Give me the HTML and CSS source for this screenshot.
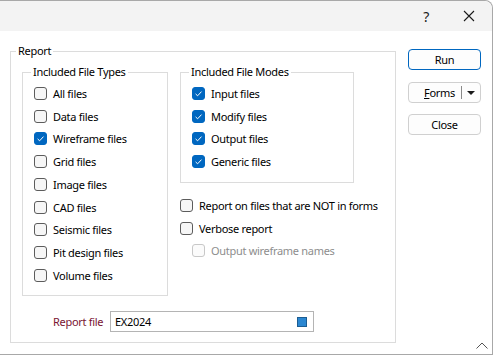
FILE: index.html
```html
<!DOCTYPE html>
<html>
<head>
    <title>Report</title>
    <link rel="stylesheet" href="styles.css">
</head>
<body>
    <div class="window">
        <div class="titlebar">
            <span class="help">?</span>
            <span class="close-x">
                <svg width="12" height="12" viewBox="0 0 12 12"><path d="M1 1L11 11M11 1L1 11" stroke="#1a1a1a" stroke-width="1.1" fill="none"/></svg>
            </span>
        </div>
        <div class="content">
            <fieldset class="group report">
                <legend>Report</legend>
                <div class="report-body">
                    <div class="report-top">
                        <fieldset class="group types">
                            <legend>Included File Types</legend>
                            <div class="group-body">
                                <div class="check"><span class="box"></span>All files</div>
                                <div class="check"><span class="box"></span>Data files</div>
                                <div class="check"><span class="box checked"><svg width="13" height="13" viewBox="0 0 13 13"><path d="M3.6 6.9L5.6 8.8L9.5 4.6" stroke="#fff" stroke-width="1" fill="none"/></svg></span>Wireframe files</div>
                                <div class="check"><span class="box"></span>Grid files</div>
                                <div class="check"><span class="box"></span>Image files</div>
                                <div class="check"><span class="box"></span>CAD files</div>
                                <div class="check"><span class="box"></span>Seismic files</div>
                                <div class="check"><span class="box"></span>Pit design files</div>
                                <div class="check"><span class="box"></span>Volume files</div>
                            </div>
                        </fieldset>
                        <div class="right-col">
                            <fieldset class="group modes">
                                <legend>Included File Modes</legend>
                                <div class="group-body">
                                    <div class="check"><span class="box checked"><svg width="13" height="13" viewBox="0 0 13 13"><path d="M3.6 6.9L5.6 8.8L9.5 4.6" stroke="#fff" stroke-width="1" fill="none"/></svg></span>Input files</div>
                                    <div class="check"><span class="box checked"><svg width="13" height="13" viewBox="0 0 13 13"><path d="M3.6 6.9L5.6 8.8L9.5 4.6" stroke="#fff" stroke-width="1" fill="none"/></svg></span>Modify files</div>
                                    <div class="check"><span class="box checked"><svg width="13" height="13" viewBox="0 0 13 13"><path d="M3.6 6.9L5.6 8.8L9.5 4.6" stroke="#fff" stroke-width="1" fill="none"/></svg></span>Output files</div>
                                    <div class="check"><span class="box checked"><svg width="13" height="13" viewBox="0 0 13 13"><path d="M3.6 6.9L5.6 8.8L9.5 4.6" stroke="#fff" stroke-width="1" fill="none"/></svg></span>Generic files</div>
                                </div>
                            </fieldset>
                            <div class="options">
                                <div class="check"><span class="box"></span>Report on files that are NOT in forms</div>
                                <div class="check"><span class="box"></span>Verbose report</div>
                                <div class="check disabled indent"><span class="box"></span>Output wireframe names</div>
                            </div>
                        </div>
                    </div>
                    <div class="file-row">
                        <span class="file-label">Report file</span>
                        <div class="file-input">
                            <span>EX2024</span>
                            <span class="browse"></span>
                        </div>
                    </div>
                </div>
            </fieldset>
            <div class="buttons">
                <div class="btn default">Run</div>
                <div class="btn split"><span class="split-text"><u>F</u>orms</span><span class="split-sep"></span><span class="split-arrow"></span></div>
                <div class="btn">Close</div>
            </div>
        </div>
        <div class="grip">
            <svg width="12" height="7" viewBox="0 0 12 7"><path d="M0.5 6.5L6 1L11.5 6.5" stroke="#555" stroke-width="1" fill="none"/></svg>
        </div>
    </div>
</body>
</html>
```

FILE: styles.css
```css
body {
    margin: 0;
    background: #ffffff;
    font-family: "Noto Sans", sans-serif;
    font-size: 11px;
    letter-spacing: -0.3px;
    color: #000;
}
.window {
    position: relative;
    width: 492px;
    height: 353px;
    background: #fff;
    border-top: 1px solid #a8a8a8;
    border-right: 1px solid #a8a8a8;
    border-bottom: 1px solid #a8a8a8;
    border-top-right-radius: 8px;
}
.titlebar {
    height: 30px;
    background: #f3f3f3;
    border-top-right-radius: 8px;
    display: flex;
    align-items: center;
    justify-content: flex-end;
}
.help {
    font-size: 14px;
    margin-right: 34px;
    color: #1a1a1a;
}
.close-x {
    display: flex;
    margin-right: 17px;
}
.content {
    display: flex;
    padding: 12px 0 0 10px;
}
.group {
    margin: 0;
    padding: 0;
    border: 1px solid #dcdcdc;
    box-sizing: border-box;
    min-width: 0;
}
.group legend {
    padding: 0 2px;
    margin-left: 8px;
    line-height: 16px;
}
.report {
    width: 386px;
    height: 300px;
}
.report > legend {
    margin-left: 5px;
}
.report-body {
    padding: 5px 0 0 11px;
}
.report-top {
    display: flex;
    gap: 12px;
}
.types {
    width: 146px;
    height: 232px;
}
.modes {
    width: 174px;
    height: 119px;
}
.group-body {
    padding: 2px 0 0 11px;
}
.check {
    height: 22.75px;
    display: flex;
    align-items: center;
    white-space: nowrap;
}
.box {
    width: 13px;
    height: 13px;
    box-sizing: border-box;
    border: 1px solid #5c5c5c;
    border-radius: 3px;
    background: #f6f6f6;
    margin-right: 6px;
    flex-shrink: 0;
    display: flex;
}
.box.checked {
    background: #0067c0;
    border-color: #0067c0;
}
.box.checked svg {
    margin: -1px;
}
.options {
    margin-top: 11px;
}
.indent {
    padding-left: 12px;
}
.disabled {
    color: #8d8d8d;
}
.disabled .box {
    border-color: #c8c8c8;
    background: #fbfbfb;
}
.file-row {
    display: flex;
    align-items: center;
    margin-top: 15px;
    padding-left: 31px;
}
.file-label {
    color: #7a1432;
    width: 57px;
}
.file-input {
    width: 204px;
    height: 21px;
    box-sizing: border-box;
    border: 1px solid #b4b4b4;
    display: flex;
    align-items: center;
    justify-content: space-between;
    padding: 0 6px 0 4px;
}
.browse {
    width: 10px;
    height: 10px;
    box-sizing: border-box;
    background: #2b87d1;
    border: 1px solid #1c5d92;
}
.buttons {
    display: flex;
    flex-direction: column;
    margin: 6px 0 0 12px;
}
.btn {
    width: 73px;
    height: 21px;
    box-sizing: border-box;
    border: 1px solid #d0d0d0;
    border-radius: 4px;
    background: #fdfdfd;
    display: flex;
    align-items: center;
    justify-content: center;
    margin-bottom: 11px;
}
.btn.default {
    border-color: #0067c0;
    margin-bottom: 12px;
}
.btn.split {
    justify-content: flex-end;
}
.split-sep {
    width: 1px;
    height: 13px;
    background: #8a8a8a;
    margin: 0 5px 0 6px;
}
.split-arrow {
    width: 0;
    height: 0;
    border-left: 4px solid transparent;
    border-right: 4px solid transparent;
    border-top: 4px solid #1a1a1a;
    margin-right: 5px;
}
.grip {
    position: absolute;
    right: 4px;
    bottom: 5px;
    display: flex;
}
```
